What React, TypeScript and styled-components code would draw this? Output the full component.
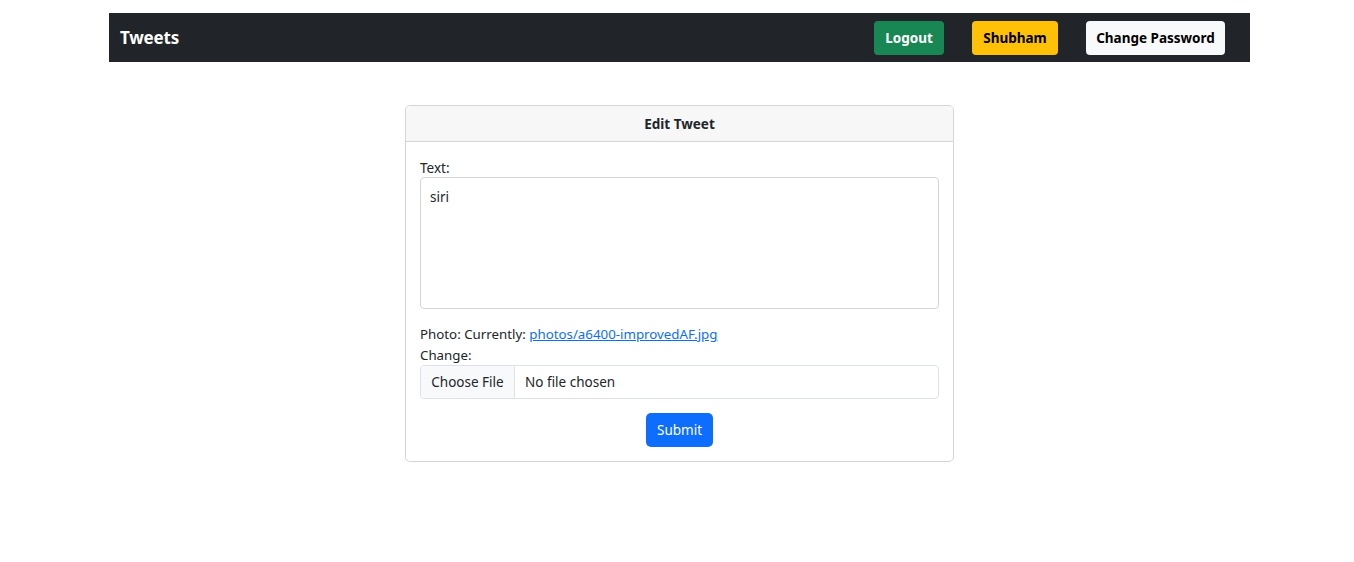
import React from "react";
import styled, { createGlobalStyle } from "styled-components";

const Global = createGlobalStyle`
  html, body { margin: 0; padding: 0; background: #fff; }
  body { font-family: "Noto Sans", "Segoe UI", sans-serif; color: #212529; font-size: 14px; }
  * { box-sizing: border-box; }
`;

const Page = styled.div`
  padding: 13px 104px 0 109px;
`;

const Navbar = styled.nav`
  height: 49px;
  background: #212529;
  display: flex;
  align-items: center;
  padding: 0 25px 0 11px;
`;

const Brand = styled.a`
  color: #fff;
  font-weight: 700;
  font-size: 17px;
  text-decoration: none;
  margin-right: auto;
  letter-spacing: -0.2px;
`;

const NavButtons = styled.div`
  display: flex;
  gap: 28px;
`;

const NavButton = styled.button<{ $bg: string; $fg: string; $w: number }>`
  width: ${(p) => p.$w}px;
  height: 34px;
  border: 0;
  border-radius: 4px;
  background: ${(p) => p.$bg};
  color: ${(p) => p.$fg};
  font-family: inherit;
  font-weight: 700;
  font-size: 13.5px;
  padding: 0;
  white-space: nowrap;
`;

const Main = styled.main`
  display: flex;
  justify-content: center;
  padding-top: 43px;
`;

const Card = styled.div`
  width: 549px;
  border: 1px solid #d3d5d8;
  border-radius: 5px;
  overflow: hidden;
`;

const CardHeader = styled.div`
  height: 36px;
  background: #f7f7f7;
  border-bottom: 1px solid #d3d5d8;
  display: flex;
  align-items: center;
  justify-content: center;
  font-weight: 700;
  font-size: 13.5px;
`;

const CardBody = styled.form`
  padding: 16px 14px 14px;
  display: flex;
  flex-direction: column;
`;

const Label = styled.label`
  display: block;
  font-size: 13.5px;
  line-height: 20px;
  height: 19px;
`;

const TextArea = styled.textarea`
  width: 100%;
  height: 132px;
  border: 1px solid #d3d5d8;
  border-radius: 4px;
  padding: 10px 9px;
  font-family: inherit;
  font-size: 13.5px;
  color: #212529;
  resize: none;
  margin-bottom: 15px;
`;

const PhotoLine = styled.div`
  font-size: 13.3px;
  line-height: 21px;
`;

const ChangeLine = styled.div`
  font-size: 13.3px;
  line-height: 20px;
`;

const Link = styled.a`
  color: #0d6efd;
  text-decoration: underline;
`;

const FileInput = styled.div`
  height: 34px;
  border: 1px solid #dee2e6;
  border-radius: 4px;
  display: flex;
  align-items: stretch;
  overflow: hidden;
  font-size: 13.5px;
`;

const FileButton = styled.div`
  width: 94px;
  background: #f8f9fa;
  border-right: 1px solid #dee2e6;
  display: flex;
  align-items: center;
  justify-content: center;
`;

const FileName = styled.div`
  display: flex;
  align-items: center;
  padding-left: 10px;
`;

const SubmitRow = styled.div`
  display: flex;
  justify-content: center;
  margin-top: 14px;
`;

const Submit = styled.button`
  width: 67px;
  height: 34px;
  border: 0;
  border-radius: 5px;
  background: #0d6efd;
  color: #fff;
  font-family: inherit;
  font-size: 13.5px;
`;

export default function App() {
  return (
    <>
      <Global />
      <Page>
        <Navbar>
          <Brand href="#">Tweets</Brand>
          <NavButtons>
            <NavButton $bg="#198754" $fg="#fff" $w={70}>Logout</NavButton>
            <NavButton $bg="#ffc107" $fg="#000" $w={86}>Shubham</NavButton>
            <NavButton $bg="#f8f9fa" $fg="#000" $w={139}>Change Password</NavButton>
          </NavButtons>
        </Navbar>
        <Main>
          <Card>
            <CardHeader>Edit Tweet</CardHeader>
            <CardBody>
              <Label>Text:</Label>
              <TextArea defaultValue="siri" />
              <PhotoLine>
                Photo: Currently: <Link href="#">photos/a6400-improvedAF.jpg</Link>
              </PhotoLine>
              <ChangeLine>Change:</ChangeLine>
              <FileInput>
                <FileButton>Choose File</FileButton>
                <FileName>No file chosen</FileName>
              </FileInput>
              <SubmitRow>
                <Submit type="button">Submit</Submit>
              </SubmitRow>
            </CardBody>
          </Card>
        </Main>
      </Page>
    </>
  );
}
